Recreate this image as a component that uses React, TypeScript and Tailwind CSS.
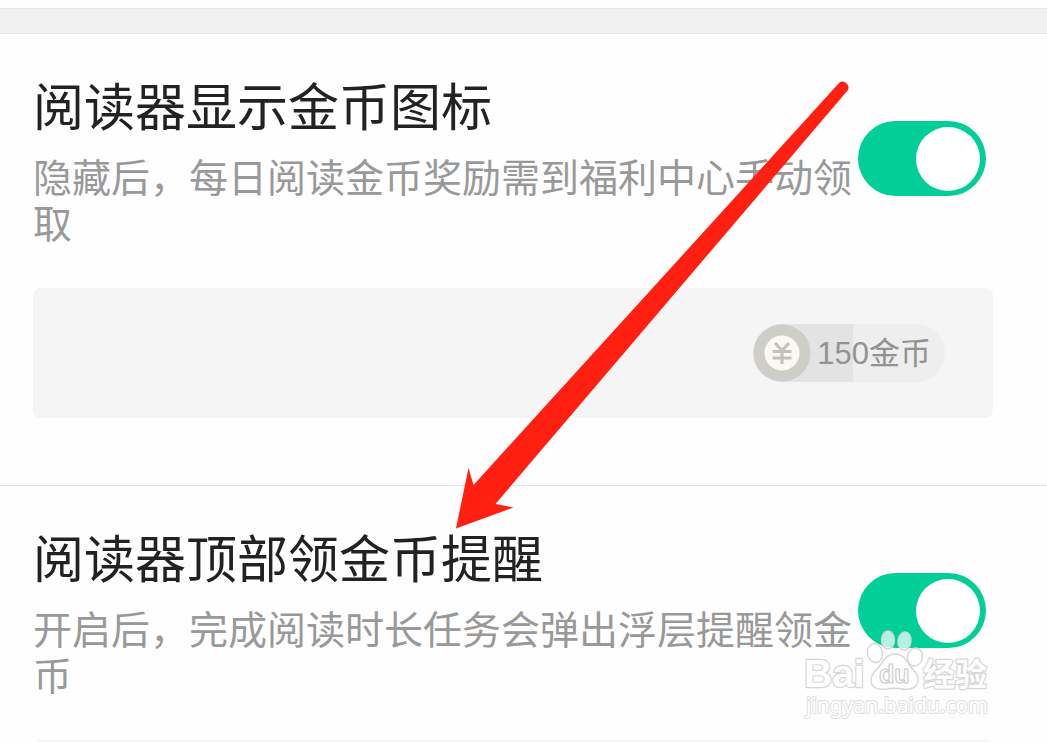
import { useId, useState } from "react";

type SettingProps = {
  title: string;
  description: string;
  badge?: string;
};

function CoinIcon() {
  return (
    <svg viewBox="0 0 58 58" className="size-[58px] shrink-0" aria-hidden="true">
      <circle cx="29" cy="29" r="28.5" fill="#cecdc7" />
      <circle cx="29" cy="29" r="17.5" fill="#fbf9f3" />
      <path
        d="M22 19 L29 26.5 L36 19 M19.5 27.5 H38.5 M19.5 34 H38.5 M29 26.5 V40"
        fill="none"
        stroke="#c3c1ba"
        strokeWidth="3.2"
      />
    </svg>
  );
}

function SettingSection({ title, description, badge }: SettingProps) {
  const id = useId();
  const [on, setOn] = useState(true);

  return (
    <section className="border-b border-[#e6e6e6] pt-[45px] pb-[67px]">
      <div className="flex items-start pr-[61px] pl-[33px]">
        <div className="min-w-0 flex-1">
          <label htmlFor={id} className="block text-[51px] leading-[60px] text-[#222222]">
            {title}
          </label>
          <p id={`${id}-text`} className="mt-[17px] text-[39px] leading-[46px] text-[#999999]">
            {description}
          </p>
        </div>
        <input
          id={id}
          type="checkbox"
          role="switch"
          aria-describedby={`${id}-text`}
          checked={on}
          onChange={(e) => setOn(e.target.checked)}
          className="mt-[42px] flex h-[75px] w-32 shrink-0 cursor-pointer appearance-none items-center rounded-full bg-[#d5d5d5] px-1.5 before:size-16 before:rounded-full before:bg-white before:content-[''] checked:justify-end checked:bg-[#02cf97]"
        />
      </div>
      <div className="mt-10 mr-[54px] ml-[33px] flex h-[130px] items-center justify-end rounded-lg bg-[#f5f5f5] pr-12">
        {badge && (
          <div className="flex h-[58px] items-center rounded-full bg-linear-to-r from-[#e3e3e3] from-52% to-[#eeeeee] to-52% pr-3.5">
            <CoinIcon />
            <span className="ml-1.5 pt-0.5 text-[31px] leading-[56px] text-[#929292]">{badge}</span>
          </div>
        )}
      </div>
    </section>
  );
}

function PointerArrow() {
  return (
    <svg
      viewBox="0 0 396 452"
      className="pointer-events-none absolute top-[78px] left-[455px] h-[452px] w-[396px]"
      aria-hidden="true"
    >
      <path
        d="M1 450.5 L13.5 390 L18.5 407 L384.5 4.5 A6 6 0 0 1 393 12 L40.5 426 L58.5 429.5 Z"
        fill="#ff2012"
      />
    </svg>
  );
}

function Watermark() {
  return (
    <svg
      viewBox="0 0 200 96"
      className="pointer-events-none absolute top-[626px] right-[49px] h-24 w-[200px]"
      fill="#ffffff"
      stroke="#d6d6d6"
      strokeLinejoin="round"
    >
      <g strokeWidth="2.4" paintOrder="stroke">
        <text x="6" y="61" fontSize="39" fontWeight="700" fontFamily='"Liberation Sans", sans-serif'>
          Bai
        </text>
        <text x="125" y="60" fontSize="32" fontWeight="700" fontFamily='"Noto Sans CJK SC", sans-serif'>
          经验
        </text>
        <text
          x="8"
          y="87"
          fontSize="21"
          strokeWidth="2"
          stroke="#e0e0e0"
          fontFamily='"Noto Sans", sans-serif'
        >
          jingyan.baidu.com
        </text>
      </g>
      <g strokeWidth="1.4">
        <g fillOpacity="0.7">
          <ellipse cx="77" cy="27" rx="7.5" ry="9.5" transform="rotate(-12 77 27)" />
          <ellipse cx="90" cy="14" rx="6.5" ry="9" />
          <ellipse cx="106.5" cy="15" rx="6.5" ry="9" transform="rotate(8 106.5 15)" />
          <ellipse cx="117" cy="31" rx="7.5" ry="9" transform="rotate(14 117 31)" />
        </g>
        <path d="M97 28 C105 28 108 34 112 40 C116 45 121 48 120 55 C119 62 112 64 105 63 C99 62 94 62 88 63 C80 64 73 62 73 54 C73 47 79 44 83 38 C87 32 90 28 97 28 Z" />
        <text
          x="81"
          y="57"
          fontSize="25"
          fontWeight="700"
          strokeWidth="1.2"
          stroke="#cccccc"
          fontFamily='"Liberation Sans", sans-serif'
        >
          du
        </text>
      </g>
    </svg>
  );
}

export default function App() {
  return (
    <main className="relative h-screen overflow-hidden bg-[#fefefe] pt-2 font-['Liberation_Sans','Noto_Sans_CJK_SC',sans-serif]">
      <div className="h-[26px] border-y border-[#e6e6e6] bg-[#f0f0f0]" />
      <SettingSection
        title="阅读器显示金币图标"
        description="隐藏后，每日阅读金币奖励需到福利中心手动领取"
        badge="150金币"
      />
      <SettingSection
        title="阅读器顶部领金币提醒"
        description="开启后，完成阅读时长任务会弹出浮层提醒领金币"
      />
      <PointerArrow />
      <Watermark />
    </main>
  );
}
